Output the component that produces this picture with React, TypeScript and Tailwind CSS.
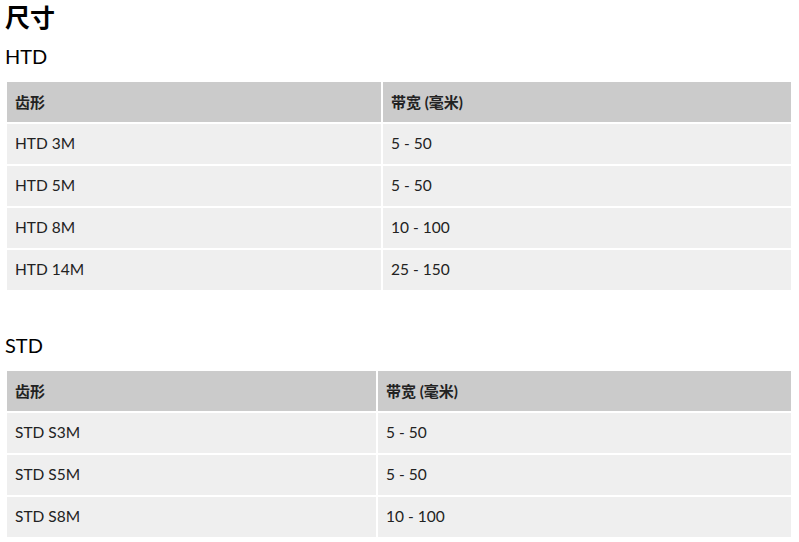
const htd = [
  ['HTD 3M', '5 - 50'],
  ['HTD 5M', '5 - 50'],
  ['HTD 8M', '10 - 100'],
  ['HTD 14M', '25 - 150'],
]

const std = [
  ['STD S3M', '5 - 50'],
  ['STD S5M', '5 - 50'],
  ['STD S8M', '10 - 100'],
]

function SizeTable({ rows, firstCol }: { rows: string[][]; firstCol: string }) {
  return (
    <table className="w-[788px] table-fixed border-separate border-spacing-[2px] text-[15.5px] text-[#222]">
      <colgroup>
        <col className={firstCol} />
        <col />
      </colgroup>
      <thead>
        <tr className="h-[40px] bg-[#cbcbcb]">
          <th className="px-2 text-left text-[15px] font-bold">齿形</th>
          <th className="px-2 text-left text-[15px] font-bold">带宽 (毫米)</th>
        </tr>
      </thead>
      <tbody>
        {rows.map(([profile, width]) => (
          <tr key={profile} className="h-[40px] bg-[#efefef]">
            <td className="px-2">{profile}</td>
            <td className="px-2">{width}</td>
          </tr>
        ))}
      </tbody>
    </table>
  )
}

export default function App() {
  return (
    <div
      className="min-h-screen bg-white pl-[5px] pt-[1px] text-black"
      style={{ fontFamily: 'Lato, "Noto Sans CJK SC", sans-serif' }}
    >
      <h2 className="text-[25px] font-bold leading-[32px]">尺寸</h2>
      <h3 className="mt-[9px] text-[20px] leading-[28px]">HTD</h3>
      <div className="mt-[10px]">
        <SizeTable rows={htd} firstCol="w-[374px]" />
      </div>
      <h3 className="mt-[39px] text-[20px] leading-[28px]">STD</h3>
      <div className="mt-[10px]">
        <SizeTable rows={std} firstCol="w-[369px]" />
      </div>
    </div>
  )
}
